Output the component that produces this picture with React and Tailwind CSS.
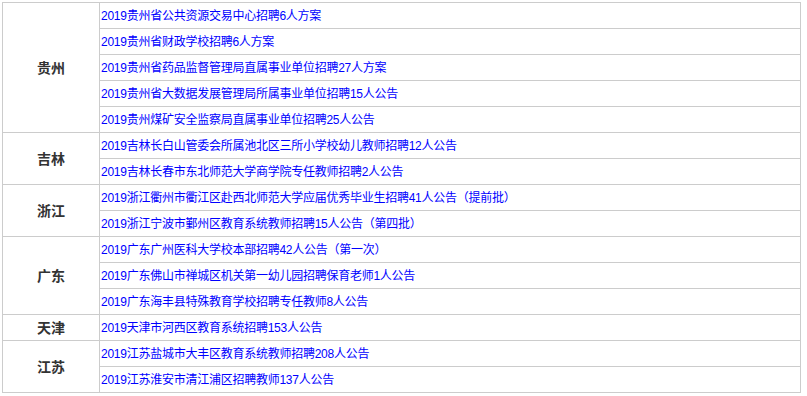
import React from 'react';

const groups = [
  {
    province: '贵州',
    items: [
      '2019贵州省公共资源交易中心招聘6人方案',
      '2019贵州省财政学校招聘6人方案',
      '2019贵州省药品监督管理局直属事业单位招聘27人方案',
      '2019贵州省大数据发展管理局所属事业单位招聘15人公告',
      '2019贵州煤矿安全监察局直属事业单位招聘25人公告'
    ]
  },
  {
    province: '吉林',
    items: [
      '2019吉林长白山管委会所属池北区三所小学校幼儿教师招聘12人公告',
      '2019吉林长春市东北师范大学商学院专任教师招聘2人公告'
    ]
  },
  {
    province: '浙江',
    items: [
      '2019浙江衢州市衢江区赴西北师范大学应届优秀毕业生招聘41人公告（提前批）',
      '2019浙江宁波市鄞州区教育系统教师招聘15人公告（第四批）'
    ]
  },
  {
    province: '广东',
    items: [
      '2019广东广州医科大学校本部招聘42人公告（第一次）',
      '2019广东佛山市禅城区机关第一幼儿园招聘保育老师1人公告',
      '2019广东海丰县特殊教育学校招聘专任教师8人公告'
    ]
  },
  {
    province: '天津',
    items: ['2019天津市河西区教育系统招聘153人公告']
  },
  {
    province: '江苏',
    items: [
      '2019江苏盐城市大丰区教育系统教师招聘208人公告',
      '2019江苏淮安市清江浦区招聘教师137人公告'
    ]
  }
];

export default function App() {
  return (
    <div className="w-[807px] h-[396px] bg-white pl-[2px] pt-[2px] font-['Liberation_Sans','Noto_Sans_CJK_SC',sans-serif]">
      <table className="w-[799px] border-collapse text-[12px] leading-none">
        <tbody>
          {groups.map(group =>
            group.items.map((item, i) => (
              <tr key={item} className="h-[26px]">
                {i === 0 && (
                  <td
                    rowSpan={group.items.length}
                    className="w-[97px] border border-[#cccccc] text-center align-middle text-[14px] font-bold text-[#333333]"
                  >
                    {group.province}
                  </td>
                )}
                <td className="border border-[#cccccc] pl-[1px] align-middle">
                  <a href="#" className="text-[#0000ff] no-underline whitespace-nowrap tracking-[-0.25px]">
                    {item}
                  </a>
                </td>
              </tr>
            ))
          )}
        </tbody>
      </table>
    </div>
  );
}
